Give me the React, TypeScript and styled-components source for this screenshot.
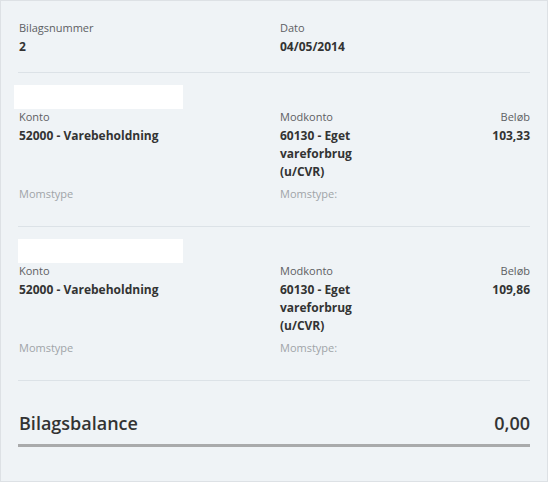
import React from 'react';
import styled, { createGlobalStyle } from 'styled-components';

const GlobalStyle = createGlobalStyle`
  body {
    margin: 0;
    font-family: 'Open Sans', 'Liberation Sans', sans-serif;
    background: #ffffff;
  }
`;

const Panel = styled.div`
  width: 548px;
  height: 482px;
  box-sizing: border-box;
  border: 1px solid #dde1e5;
  background: #eff3f6;
  padding: 0 17px;
`;

const Header = styled.div`
  display: grid;
  grid-template-columns: 261px 1fr;
  padding: 19px 0 16px 1px;
  border-bottom: 1px solid #dce2e7;
`;

const Field = styled.div<{ align?: 'left' | 'right' }>`
  display: flex;
  flex-direction: column;
  text-align: ${(p) => p.align || 'left'};
`;

const Label = styled.div<{ muted?: boolean }>`
  font-size: 11px;
  line-height: 16px;
  color: ${(p) => (p.muted ? '#a0a4a8' : '#5d6063')};
`;

const Value = styled.div`
  margin-top: 2px;
  font-size: 12px;
  line-height: 18px;
  font-weight: 700;
  color: #333333;
`;

const Entry = styled.div`
  padding: 12px 0 24px;
  border-bottom: 1px solid #dce2e7;
`;

// white placeholder strip above each entry
const Blank = styled.div<{ shift: number; w: number }>`
  width: ${(p) => p.w}px;
  height: 24px;
  margin-left: ${(p) => p.shift}px;
  background: #ffffff;
`;

const EntryGrid = styled.div`
  display: grid;
  grid-template-columns: 261px 110px 1fr;
  padding-left: 1px;
`;

const Moms = styled(Label)`
  margin-top: 5px;
`;

const Balance = styled.div`
  display: flex;
  justify-content: space-between;
  align-items: center;
  margin-top: 30px;
  padding: 0 0 9px 1px;
  border-bottom: 3px solid #a9aaab;
  font-size: 18px;
  line-height: 24px;
  font-weight: 600;
  color: #333333;
`;

const entries = [
  {
    konto: '52000 - Varebeholdning',
    modkonto: '60130 - Eget vareforbrug (u/CVR)',
    amount: '103,33',
    shift: -4,
    w: 169,
  },
  {
    konto: '52000 - Varebeholdning',
    modkonto: '60130 - Eget vareforbrug (u/CVR)',
    amount: '109,86',
    shift: 0,
    w: 165,
  },
];

function App() {
  return (
    <>
      <GlobalStyle />
      <Panel>
        <Header>
          <Field>
            <Label>Bilagsnummer</Label>
            <Value>2</Value>
          </Field>
          <Field>
            <Label>Dato</Label>
            <Value>04/05/2014</Value>
          </Field>
        </Header>

        {entries.map((e, i) => (
          <Entry key={i}>
            <Blank shift={e.shift} w={e.w} />
            <EntryGrid>
              <Field>
                <Label>Konto</Label>
                <Value>{e.konto}</Value>
              </Field>
              <Field>
                <Label>Modkonto</Label>
                <Value>{e.modkonto}</Value>
              </Field>
              <Field align="right">
                <Label>Beløb</Label>
                <Value>{e.amount}</Value>
              </Field>
              <Moms muted>Momstype</Moms>
              <Moms muted>Momstype:</Moms>
            </EntryGrid>
          </Entry>
        ))}

        <Balance>
          <span>Bilagsbalance</span>
          <span>0,00</span>
        </Balance>
      </Panel>
    </>
  );
}

export default App;
